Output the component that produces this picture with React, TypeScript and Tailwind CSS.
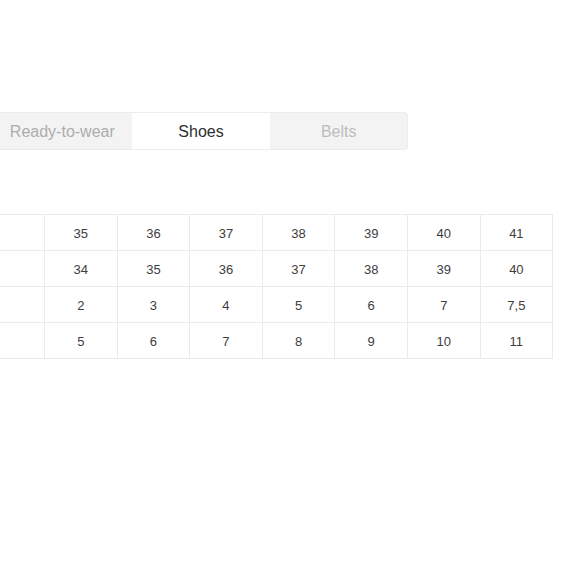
import React from "react";

const rows = [
  ["35", "36", "37", "38", "39", "40", "41"],
  ["34", "35", "36", "37", "38", "39", "40"],
  ["2", "3", "4", "5", "6", "7", "7,5"],
  ["5", "6", "7", "8", "9", "10", "11"],
];

export default function App() {
  return (
    <div className="w-[580px] h-[580px] bg-white overflow-hidden font-['Liberation_Sans',Arial,sans-serif]">
      <div className="pt-[112px]">
        <div className="ml-[-8px] flex w-[416px] h-[38px] bg-[#f3f3f3] border border-[#ececec] rounded-[3px]">
          <div className="w-[139px] flex items-center justify-center pt-[1px] text-[16px] text-[#adadad]">Ready-to-wear</div>
          <div className="w-[139px] flex items-center justify-center pt-[1px] text-[16px] text-[#2e2e2e] bg-white">Shoes</div>
          <div className="w-[137px] flex items-center justify-center pt-[1px] text-[16px] text-[#bdbdbd]">Belts</div>
        </div>
      </div>
      <div className="mt-[64px] ml-[-29px]">
        <table className="border-collapse table-fixed w-[581px]">
          <tbody>
            {rows.map((r, i) => (
              <tr key={i} className="h-[36px]">
                <td className="border border-[#ebebeb] w-[73px]"></td>
                {r.map((c, j) => (
                  <td key={j} className="border border-[#ebebeb] w-[72.6px] pt-[3px] text-center text-[13px] text-[#3d3d3d] align-middle">
                    {c}
                  </td>
                ))}
              </tr>
            ))}
          </tbody>
        </table>
      </div>
    </div>
  );
}
